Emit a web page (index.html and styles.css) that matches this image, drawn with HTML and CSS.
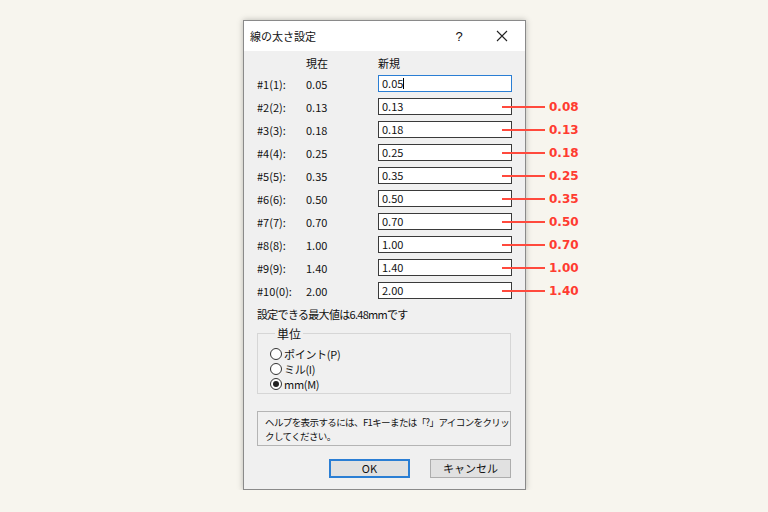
FILE: index.html
```html
<!DOCTYPE html>
<html lang="ja">
<head>
  <meta charset="UTF-8">
  <title>線の太さ設定</title>
  <link rel="stylesheet" href="styles.css">
</head>
<body>

<div class="dialog">
  <!-- title bar -->
  <div class="titlebar">
    <span class="title">線の太さ設定</span>
    <span class="help-btn">?</span>
    <span class="close-btn">
      <svg width="12" height="12" viewBox="0 0 12 12"><path d="M1 1 L11 11 M11 1 L1 11" stroke="#222" stroke-width="1.1" fill="none"/></svg>
    </span>
  </div>

  <div class="body">
    <div class="row head">
      <span></span><span>現在</span><span>新規</span>
    </div>
    <div class="row">
      <span>#1(1):</span><span>0.05</span>
      <span class="field"><span class="input active">0.05<i class="caret"></i></span></span>
    </div>
    <div class="row">
      <span>#2(2):</span><span>0.13</span>
      <span class="field"><span class="input">0.13</span><span class="note"><b></b>0.08</span></span>
    </div>
    <div class="row">
      <span>#3(3):</span><span>0.18</span>
      <span class="field"><span class="input">0.18</span><span class="note"><b></b>0.13</span></span>
    </div>
    <div class="row">
      <span>#4(4):</span><span>0.25</span>
      <span class="field"><span class="input">0.25</span><span class="note"><b></b>0.18</span></span>
    </div>
    <div class="row">
      <span>#5(5):</span><span>0.35</span>
      <span class="field"><span class="input">0.35</span><span class="note"><b></b>0.25</span></span>
    </div>
    <div class="row">
      <span>#6(6):</span><span>0.50</span>
      <span class="field"><span class="input">0.50</span><span class="note"><b></b>0.35</span></span>
    </div>
    <div class="row">
      <span>#7(7):</span><span>0.70</span>
      <span class="field"><span class="input">0.70</span><span class="note"><b></b>0.50</span></span>
    </div>
    <div class="row">
      <span>#8(8):</span><span>1.00</span>
      <span class="field"><span class="input">1.00</span><span class="note"><b></b>0.70</span></span>
    </div>
    <div class="row">
      <span>#9(9):</span><span>1.40</span>
      <span class="field"><span class="input">1.40</span><span class="note"><b></b>1.00</span></span>
    </div>
    <div class="row">
      <span>#10(0):</span><span>2.00</span>
      <span class="field"><span class="input">2.00</span><span class="note"><b></b>1.40</span></span>
    </div>

    <div class="max-note">設定できる最大値は6.48mmです</div>

    <fieldset class="unit">
      <legend>単位</legend>
      <div class="radio"><span class="dot"></span>ポイント(P)</div>
      <div class="radio"><span class="dot"></span>ミル(I)</div>
      <div class="radio"><span class="dot checked"></span>mm(M)</div>
    </fieldset>

    <div class="help-box">ヘルプを表示するには、F1キーまたは「?」アイコンをクリッ<br>クしてください。</div>

    <div class="buttons">
      <span class="btn default">OK</span>
      <span class="btn">キャンセル</span>
    </div>
  </div>
</div>

</body>
</html>
```

FILE: styles.css
```css
body {
  margin: 0;
  background-color: #f7f5ee;
  font-family: "Noto Sans CJK JP", "Noto Sans", sans-serif;
  font-size: 11px;
  color: #111;
}
.dialog {
  margin: 20px 0 0 243px;
  width: 283px;
  height: 470px;
  box-sizing: border-box;
  border: 1px solid #8a8a8a;
  background: #f0f0f0;
  box-shadow: 0 0 6px rgba(0, 0, 0, 0.25);
}
.titlebar {
  display: flex;
  align-items: center;
  height: 30px;
  background: #fff;
  padding-left: 6px;
}
.title {
  flex: 1;
  font-size: 11px;
}
.help-btn {
  width: 30px;
  margin-right: 5px;
  text-align: center;
  font-family: "Liberation Sans", sans-serif;
  font-size: 13px;
}
.close-btn {
  width: 46px;
  display: flex;
  justify-content: center;
}
.body {
  padding: 3px 14px 0 13px;
}
.row {
  display: grid;
  grid-template-columns: 49px 72px 134px;
  align-items: center;
  height: 23px;
}
.row.head {
  height: 18px;
}
.field {
  position: relative;
  display: block;
}
.input {
  display: block;
  height: 17px;
  box-sizing: border-box;
  border: 1px solid #3a3a3a;
  background: #fff;
  padding-left: 3px;
  line-height: 15px;
}
.input.active {
  border-color: #2a7ed4;
}
.caret {
  display: inline-block;
  width: 1px;
  height: 11px;
  background: #000;
  vertical-align: -1px;
}
.note {
  position: absolute;
  left: 124px;
  top: 0;
  height: 17px;
  display: flex;
  align-items: center;
  font-family: "DejaVu Sans", sans-serif;
  font-weight: bold;
  font-size: 12px;
  color: #ff3b30;
  white-space: nowrap;
}
.note b {
  display: block;
  width: 43px;
  height: 2px;
  background: #ff4a3d;
  margin-right: 4px;
}
.max-note {
  margin-top: 4px;
  line-height: 16px;
  letter-spacing: -0.7px;
}
.unit {
  margin: 3px 0 0;
  padding: 4px 0 2px 12px;
  width: 254px;
  box-sizing: border-box;
  border: 1px solid #d6d6d6;
}
.unit legend {
  padding: 0 2px;
  margin-left: 5px;
  font-size: 12px;
}
.radio {
  display: flex;
  align-items: center;
  height: 15px;
  letter-spacing: -0.3px;
}
.dot {
  width: 12px;
  height: 12px;
  box-sizing: border-box;
  border: 1px solid #333;
  border-radius: 50%;
  background: #fff;
  margin-right: 2px;
  position: relative;
}
.dot.checked::after {
  content: "";
  position: absolute;
  left: 2px;
  top: 2px;
  width: 6px;
  height: 6px;
  border-radius: 50%;
  background: #222;
}
.help-box {
  margin-top: 17px;
  width: 254px;
  height: 35px;
  box-sizing: border-box;
  border: 1px solid #b4b4b4;
  padding: 3px 0 0 7px;
  line-height: 14px;
  font-size: 9.5px;
  letter-spacing: -0.6px;
  white-space: nowrap;
}
.buttons {
  display: flex;
  justify-content: flex-end;
  gap: 20px;
  margin-top: 13px;
}
.btn {
  width: 81px;
  height: 19px;
  box-sizing: border-box;
  border: 1px solid #adadad;
  background: #e1e1e1;
  text-align: center;
  line-height: 17px;
}
.btn.default {
  border: 2px solid #2a7ed4;
  line-height: 15px;
}
```
